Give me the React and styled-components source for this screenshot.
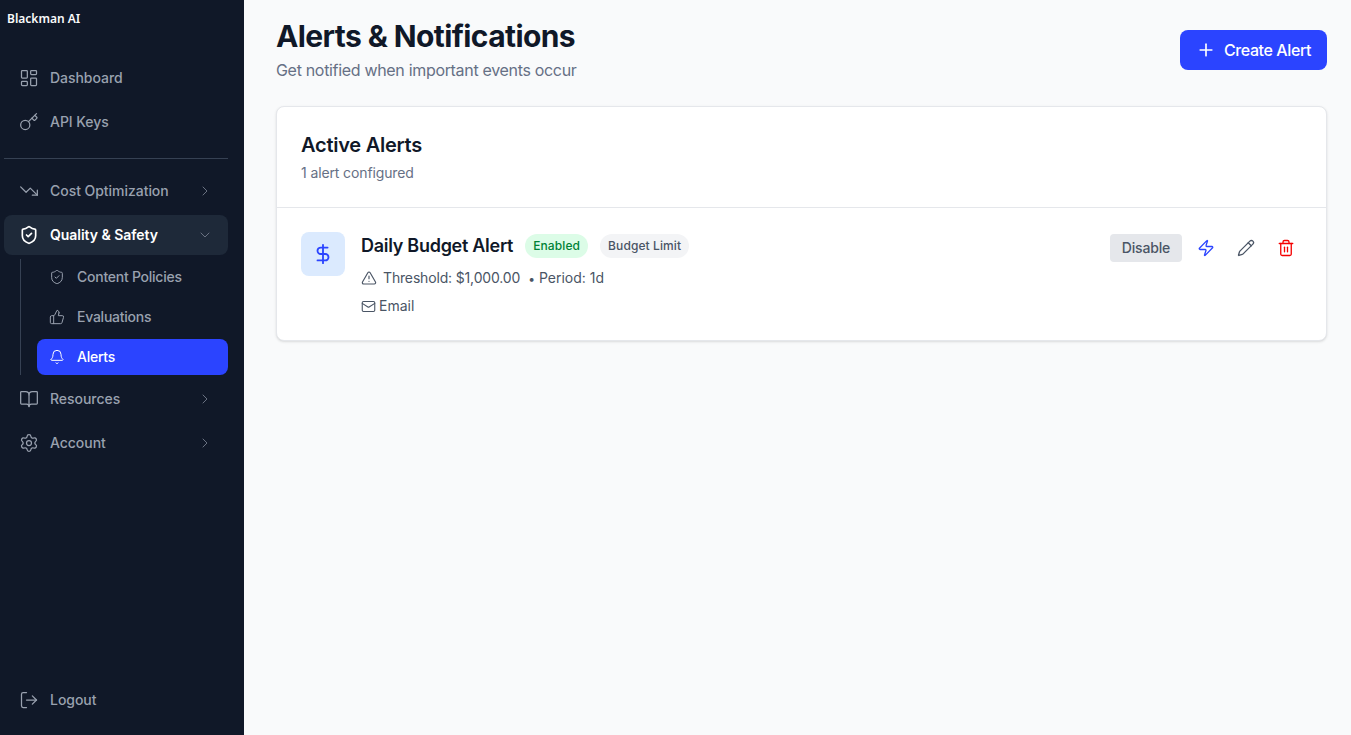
import React from "react";
import styled, { createGlobalStyle } from "styled-components";
import {
  LayoutDashboard, Key, TrendingDown, ShieldCheck, ThumbsUp, Bell, BookOpen, Settings,
  LogOut, ChevronRight, ChevronDown, DollarSign, TriangleAlert, Mail, Zap, Pencil, Trash2, Plus,
} from "lucide-react";

const Global = createGlobalStyle`
  html, body { margin: 0; padding: 0; height: 100%; }
  body { font-family: Inter, "Liberation Sans", sans-serif; background: #f9fafb; color: #101828; }
  * { box-sizing: border-box; }
`;

const Shell = styled.div`
  display: flex;
  height: 735px;
  overflow: hidden;
`;

const Sidebar = styled.aside`
  width: 244px;
  flex: none;
  background: #101828;
  display: flex;
  flex-direction: column;
  padding: 0 16px 15px 4px;
`;

const Logo = styled.div`
  font-family: "Noto Sans", sans-serif;
  font-size: 12px;
  font-weight: 600;
  line-height: 16px;
  color: #f9fafb;
  padding: 11px 0 0 3px;
  height: 58px;
`;

const Nav = styled.nav`
  display: flex;
  flex-direction: column;
  gap: 4px;
`;

const Item = styled.div`
  display: flex;
  align-items: center;
  gap: 11px;
  height: 40px;
  padding: 0 15px;
  border-radius: 8px;
  font-size: 14px;
  font-weight: ${(p) => (p.$open ? 600 : 500)};
  color: ${(p) => (p.$open ? "#ffffff" : "#99a1af")};
  background: ${(p) => (p.$open ? "#1e2939" : "transparent")};
`;

const Label = styled.span`
  flex: 1;
  margin-bottom: 2px;
  letter-spacing: -0.04px;
`;

const Caret = styled.span`
  display: flex;
  color: #6a7282;
`;

const Rule = styled.hr`
  border: 0;
  height: 1px;
  background: #364153;
  margin: 16px 0 12px;
`;

const SubList = styled.div`
  display: flex;
  flex-direction: column;
  gap: 4px;
  margin-left: 16px;
  padding-left: 16px;
  border-left: 1px solid #364153;
`;

const SubItem = styled.div`
  display: flex;
  align-items: center;
  gap: 12px;
  height: 36px;
  padding: 0 12px;
  border-radius: 8px;
  font-size: 14px;
  font-weight: 500;
  color: ${(p) => (p.$active ? "#ffffff" : "#99a1af")};
  background: ${(p) => (p.$active ? "#2b44ff" : "transparent")};
`;

const SubLabel = styled.span`
  margin-bottom: 2px;
  letter-spacing: -0.25px;
`;

const Spacer = styled.div`
  flex: 1;
`;

const Main = styled.main`
  flex: 1;
  padding: 16px 24px 0 32px;
`;

const Header = styled.header`
  display: flex;
  justify-content: space-between;
  align-items: center;
  margin-bottom: 24px;
`;

const Title = styled.h1`
  margin: 0;
  font-size: 30px;
  line-height: 40px;
  font-weight: 700;
  letter-spacing: -0.6px;
  color: #101828;
`;

const Subtitle = styled.p`
  margin: 2px 0 0;
  font-size: 16px;
  line-height: 24px;
  letter-spacing: -0.32px;
  color: #667085;
`;

const PrimaryButton = styled.button`
  display: flex;
  align-items: center;
  gap: 8px;
  height: 40px;
  margin-top: 2px;
  padding: 0 16px;
  border: 0;
  border-radius: 8px;
  background: #2b44ff;
  color: #fff;
  font: 500 16px Inter, sans-serif;
  letter-spacing: -0.4px;
`;

const Card = styled.section`
  background: #fff;
  border: 1px solid #e5e7eb;
  border-radius: 8px;
  box-shadow: 0 1px 3px rgba(0, 0, 0, 0.1), 0 1px 2px -1px rgba(0, 0, 0, 0.1);
`;

const CardHead = styled.div`
  padding: 24px;
  border-bottom: 1px solid #e5e7eb;
`;

const CardTitle = styled.h2`
  margin: 0;
  font-size: 20px;
  line-height: 28px;
  font-weight: 600;
  letter-spacing: -0.25px;
  color: #101828;
`;

const CardSub = styled.p`
  margin: 4px 0 0;
  font-size: 14px;
  line-height: 20px;
  letter-spacing: -0.12px;
  color: #667085;
`;

const Row = styled.div`
  display: flex;
  align-items: flex-start;
  gap: 16px;
  padding: 24px;
`;

const IconTile = styled.div`
  width: 44px;
  height: 44px;
  flex: none;
  display: flex;
  align-items: center;
  justify-content: center;
  border-radius: 8px;
  background: #dbeafe;
  color: #2b44ff;
`;

const Body = styled.div`
  flex: 1;
`;

const TitleRow = styled.div`
  display: flex;
  align-items: center;
  gap: 12px;
  margin: 2px 0 10px;
`;

const Name = styled.h3`
  margin: 0;
  font-size: 18px;
  line-height: 24px;
  font-weight: 600;
  letter-spacing: -0.28px;
  color: #101828;
`;

const Badge = styled.span`
  display: inline-flex;
  align-items: center;
  height: 24px;
  padding: 0 8px 2px;
  border-radius: 12px;
  font-size: 12px;
  font-weight: 500;
  letter-spacing: 0.1px;
  color: ${(p) => (p.$tone === "green" ? "#008236" : "#4a5565")};
  background: ${(p) => (p.$tone === "green" ? "#dcfce7" : "#f3f4f6")};
`;

const Meta = styled.div`
  display: flex;
  align-items: center;
  height: 20px;
  font-size: 14px;
  color: #4a5565;
  & + & {
    margin-top: 8px;
  }
`;

const MetaIcon = styled.span`
  display: flex;
  margin-right: ${(p) => p.$gap}px;
  color: #4a5565;
`;

const MetaText = styled.span`
  margin-bottom: 2px;
  letter-spacing: ${(p) => p.$tight ? "-0.16px" : "0"};
`;

const Period = styled.span`
  margin-left: 8px;
  margin-bottom: 2px;
`;

const Dot = styled.span`
  font-size: 12px;
  margin-right: 4px;
`;

const Actions = styled.div`
  display: flex;
  align-items: center;
  margin-top: 2px;
  gap: 8px;
`;

const Disable = styled.button`
  height: 28px;
  padding: 0 12px 2px;
  border: 0;
  border-radius: 4px;
  background: #e5e7eb;
  color: #4a5565;
  font: 500 14px Inter, sans-serif;
  letter-spacing: -0.2px;
`;

const IconButton = styled.button`
  width: 32px;
  height: 28px;
  padding: 0;
  border: 0;
  background: transparent;
  display: flex;
  align-items: center;
  justify-content: center;
  color: ${(p) => p.$color};
`;

export default function App() {
  return (
    <Shell>
      <Global />
      <Sidebar>
        <Logo>Blackman AI</Logo>
        <Nav>
          <Item><LayoutDashboard size={20} strokeWidth={1.5} /><Label>Dashboard</Label></Item>
          <Item><Key size={20} strokeWidth={1.5} /><Label>API Keys</Label></Item>
        </Nav>
        <Rule />
        <Nav>
          <Item><TrendingDown size={20} strokeWidth={1.5} /><Label>Cost Optimization</Label><Caret><ChevronRight size={16} strokeWidth={1.5} /></Caret></Item>
          <Item $open><ShieldCheck size={20} strokeWidth={2} /><Label>Quality &amp; Safety</Label><Caret><ChevronDown size={16} strokeWidth={1.5} /></Caret></Item>
          <SubList>
            <SubItem><ShieldCheck size={16} strokeWidth={1.5} /><SubLabel>Content Policies</SubLabel></SubItem>
            <SubItem><ThumbsUp size={16} strokeWidth={1.5} /><SubLabel>Evaluations</SubLabel></SubItem>
            <SubItem $active><Bell size={16} strokeWidth={1.5} /><SubLabel>Alerts</SubLabel></SubItem>
          </SubList>
          <Item><BookOpen size={20} strokeWidth={1.5} /><Label>Resources</Label><Caret><ChevronRight size={16} strokeWidth={1.5} /></Caret></Item>
          <Item><Settings size={20} strokeWidth={1.5} /><Label>Account</Label><Caret><ChevronRight size={16} strokeWidth={1.5} /></Caret></Item>
        </Nav>
        <Spacer />
        <Item><LogOut size={20} strokeWidth={1.5} /><Label>Logout</Label></Item>
      </Sidebar>
      <Main>
        <Header>
          <div>
            <Title>Alerts &amp; Notifications</Title>
            <Subtitle>Get notified when important events occur</Subtitle>
          </div>
          <PrimaryButton><Plus size={20} />Create Alert</PrimaryButton>
        </Header>
        <Card>
          <CardHead>
            <CardTitle>Active Alerts</CardTitle>
            <CardSub>1 alert configured</CardSub>
          </CardHead>
          <Row>
            <IconTile><DollarSign size={22} strokeWidth={2} /></IconTile>
            <Body>
              <TitleRow>
                <Name>Daily Budget Alert</Name>
                <Badge $tone="green">Enabled</Badge>
                <Badge>Budget Limit</Badge>
              </TitleRow>
              <Meta>
                <MetaIcon $gap={6}><TriangleAlert size={16} strokeWidth={1.75} /></MetaIcon>
                <MetaText $tight>Threshold: $1,000.00</MetaText>
                <Period><Dot>•</Dot>Period: 1d</Period>
              </Meta>
              <Meta>
                <MetaIcon $gap={3}><Mail size={15} strokeWidth={1.75} /></MetaIcon>
                <MetaText>Email</MetaText>
              </Meta>
            </Body>
            <Actions>
              <Disable>Disable</Disable>
              <IconButton $color="#2b44ff"><Zap size={18} strokeWidth={1.75} /></IconButton>
              <IconButton $color="#4a5565"><Pencil size={18} strokeWidth={1.75} /></IconButton>
              <IconButton $color="#f50000"><Trash2 size={18} strokeWidth={1.75} /></IconButton>
            </Actions>
          </Row>
        </Card>
      </Main>
    </Shell>
  );
}
